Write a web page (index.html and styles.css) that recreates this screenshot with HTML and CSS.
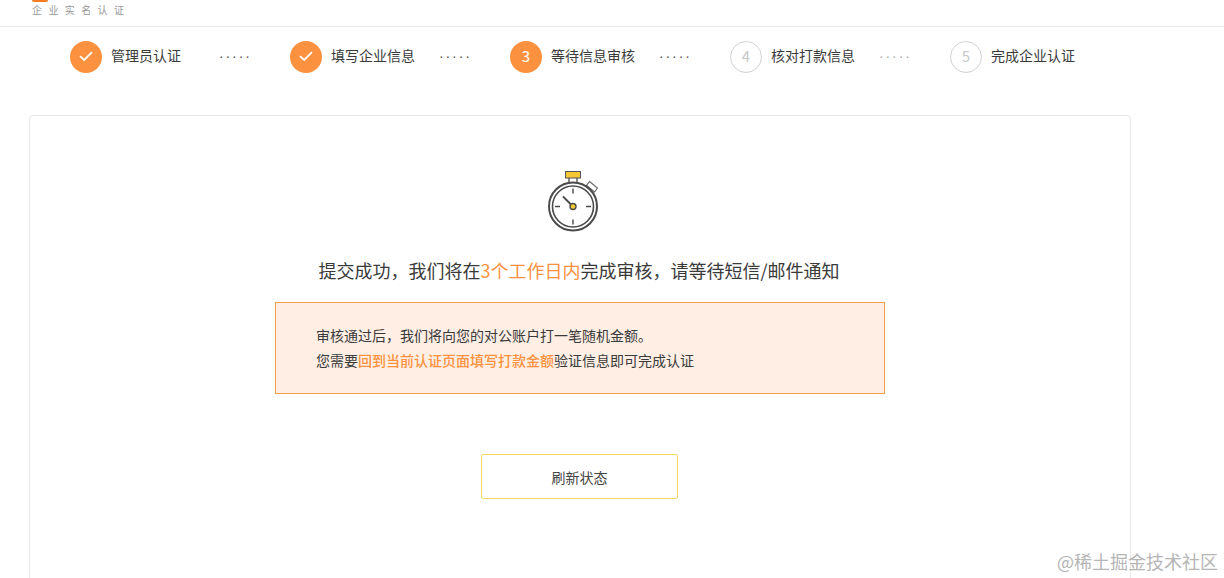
FILE: index.html
```html
<!DOCTYPE html>
<html lang="zh-CN">
<head>
<meta charset="utf-8">
<title>企业实名认证</title>
<link rel="stylesheet" href="styles.css">
</head>
<body>
<header class="header">
  <div class="logo-mark"></div>
  <div class="logo-text">企业实名认证</div>
</header>
<ol class="steps">
  <li class="step">
    <span class="badge badge-on"><svg class="check" viewBox="0 0 16 12" width="16" height="12"><path d="M2 6.2 6.2 10 14 2.2" fill="none" stroke="#fff" stroke-width="1.8"/></svg></span>
    <span class="step-label">管理员认证</span>
    <span class="dots">·····</span>
  </li>
  <li class="step">
    <span class="badge badge-on"><svg class="check" viewBox="0 0 16 12" width="16" height="12"><path d="M2 6.2 6.2 10 14 2.2" fill="none" stroke="#fff" stroke-width="1.8"/></svg></span>
    <span class="step-label">填写企业信息</span>
    <span class="dots">·····</span>
  </li>
  <li class="step">
    <span class="badge badge-on">3</span>
    <span class="step-label">等待信息审核</span>
    <span class="dots">·····</span>
  </li>
  <li class="step">
    <span class="badge badge-off">4</span>
    <span class="step-label">核对打款信息</span>
    <span class="dots dots-off">·····</span>
  </li>
  <li class="step">
    <span class="badge badge-off">5</span>
    <span class="step-label">完成企业认证</span>
  </li>
</ol>
<main class="card">
  <svg class="timer" viewBox="0 0 50 62" width="50" height="62">
    <rect x="17.500" y="1.500" width="15" height="6.500" fill="#f5c935" stroke="#555" stroke-width="1"/>
    <path d="M21 8v4M29 8v4" stroke="#555" stroke-width="1.400" fill="none"/>
    <path d="M41.500 11.500 49.500 18 46.500 22 38.500 15.500z" stroke="#666" stroke-width="1.200" fill="#fff"/>
    <circle cx="25" cy="36.500" r="24" fill="#fff" stroke="#4a4a4a" stroke-width="2"/>
    <circle cx="25" cy="36.500" r="20.500" fill="none" stroke="#4a4a4a" stroke-width="1.600"/>
    <path d="M25 18.500v5M25 49.500v5M7 36.500h5M38 36.500h5" stroke="#4a4a4a" stroke-width="1.400"/>
    <path d="M23 34.500 15 26.500" stroke="#4a4a4a" stroke-width="1.800"/>
    <circle cx="25" cy="36.500" r="3" fill="#f5c935" stroke="#4a4a4a" stroke-width="1.400"/>
  </svg>
  <h1 class="title">提交成功，我们将在<em class="accent">3个工作日内</em>完成审核，请等待短信/邮件通知</h1>
  <section class="notice">
    <p>审核通过后，我们将向您的对公账户打一笔随机金额。</p>
    <p>您需要<strong class="accent">回到当前认证页面填写打款金额</strong>验证信息即可完成认证</p>
  </section>
  <button class="refresh" type="button">刷新状态</button>
</main>
<div class="watermark">@稀土掘金技术社区</div>
</body>
</html>
```
FILE: styles.css
```css
* { box-sizing: border-box; }
html, body { height: 578px; overflow: hidden; }
body {
  margin: 0;
  position: relative;
  background: #fff;
  color: #333;
  font-family: "Noto Sans CJK SC", "Liberation Sans", sans-serif;
}
.header {
  height: 27px;
  border-bottom: 1px solid #e8e8e8;
  padding-left: 32px;
}
.logo-mark {
  width: 16px;
  height: 2px;
  background: #f57c1f;
  border-radius: 0 0 8px 8px;
}
.logo-text {
  margin-top: 2px;
  font-size: 10px;
  line-height: 12px;
  letter-spacing: 6.400px;
  color: #999;
  white-space: nowrap;
}
.steps {
  display: grid;
  grid-template-columns: repeat(5, 220px);
  margin: 14px 0 0;
  padding: 0 0 0 70px;
  list-style: none;
}
.step {
  position: relative;
  display: flex;
  align-items: center;
  height: 32px;
  font-size: 14px;
  white-space: nowrap;
}
.badge {
  display: flex;
  align-items: center;
  justify-content: center;
  flex: none;
  width: 32px;
  height: 32px;
  padding-bottom: 3px;
  border-radius: 50%;
  font-size: 15px;
}
.badge-on { background: #fc923f; color: #fff; }
.badge-off { border: 1px solid #d2d2d2; color: #c8c8c8; }
.step-label { margin: -4px 0 0 9px; color: #3a3a3a; }
.dots {
  position: absolute;
  left: 149px;
  top: -1px;
  font-family: "Liberation Sans", sans-serif;
  letter-spacing: 1.900px;
  color: #555;
  line-height: 32px;
}
.dots-off { color: #aaa; }
.card {
  display: flex;
  flex-direction: column;
  align-items: center;
  width: 1102px;
  height: 620px;
  margin: 42px 0 0 29px;
  padding-top: 54px;
  border: 1px solid #e8e8e8;
  border-radius: 4px;
}
.timer { display: block; margin-left: -14px; }
.title {
  margin: 24px 2px 0 0;
  font-size: 18px;
  font-weight: 400;
  line-height: 28px;
  color: #3a3a3a;
}
.accent { color: #fc923f; font-style: normal; font-weight: 400; }
.notice {
  width: 610px;
  height: 92px;
  margin-top: 18px;
  padding: 20px 40px 0;
  background: #ffeee4;
  border: 1px solid #f0a050;
  font-size: 14px;
  line-height: 25px;
  color: #3a3a3a;
}
.notice p { margin: 0; }
.notice .accent { font-weight: 500; }
.refresh {
  width: 197px;
  height: 45px;
  margin: 60px 2px 0 0;
  padding: 0 0 0 1px;
  background: #fff;
  border: 1px solid #f3d668;
  border-radius: 2px;
  font: inherit;
  font-size: 14px;
  color: #444;
}
.watermark {
  position: absolute;
  right: 6px;
  top: 548px;
  font-size: 18px;
  line-height: 26px;
  color: #b5b5b5;
  white-space: nowrap;
}
```
